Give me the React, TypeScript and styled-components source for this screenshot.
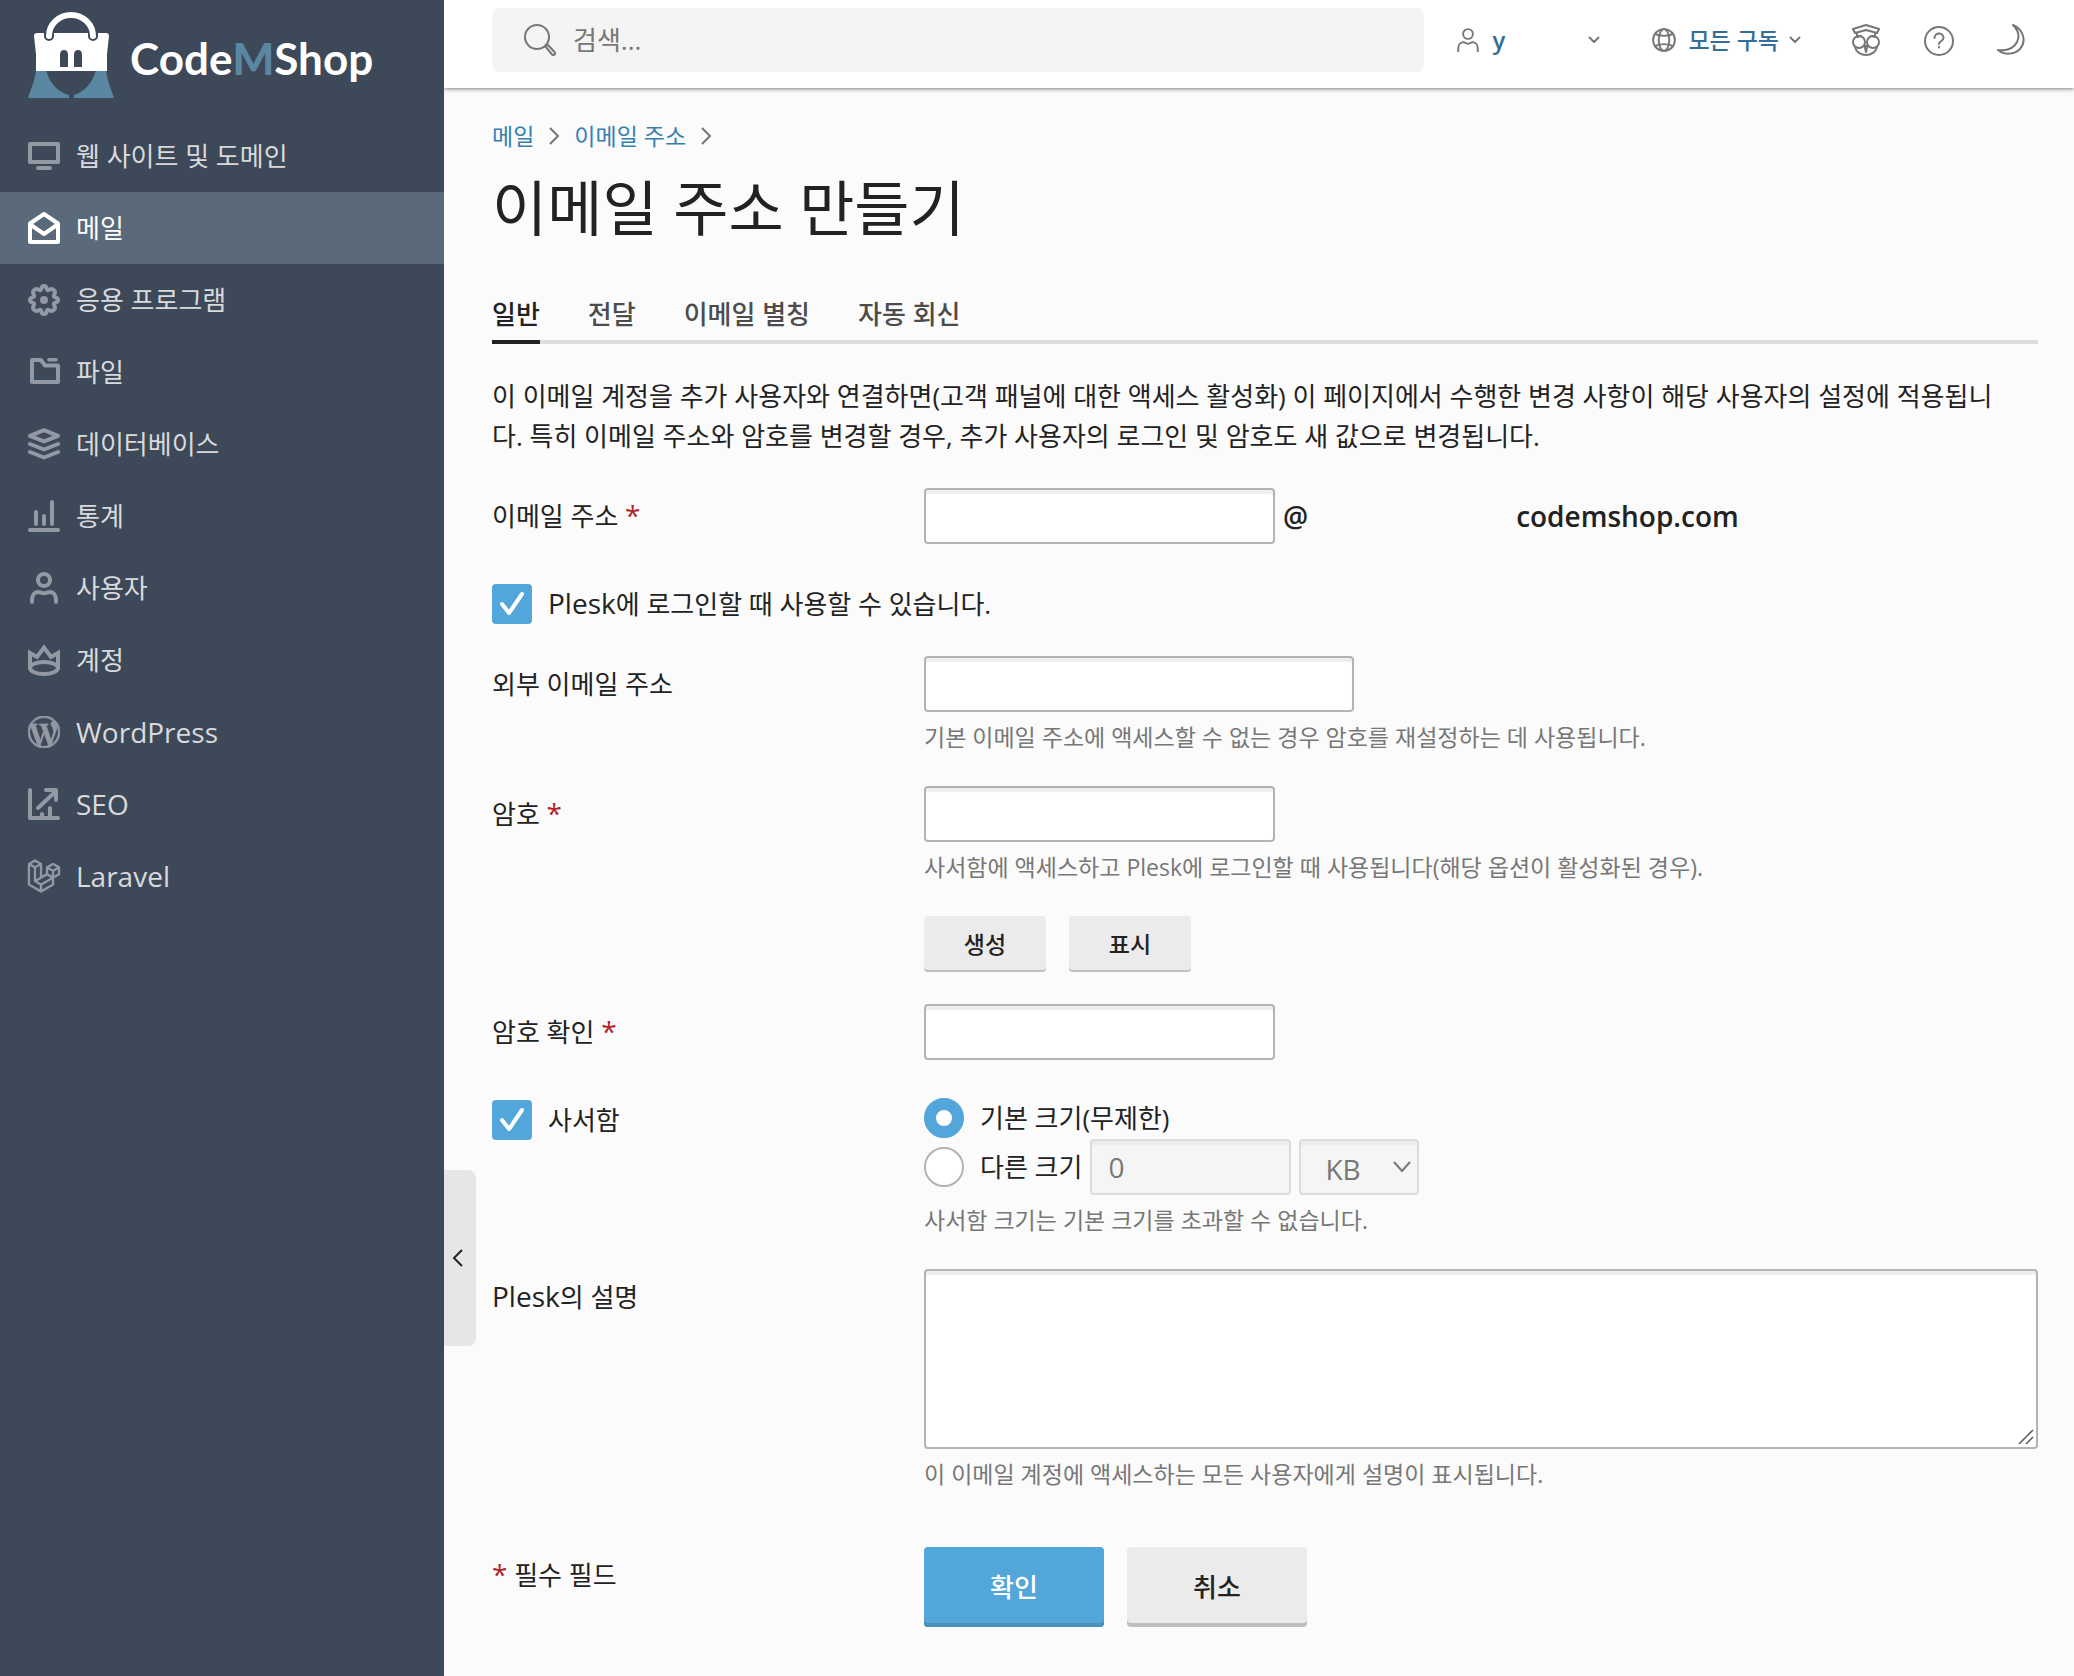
import React from "react";
import styled, { createGlobalStyle, css } from "styled-components";
import { SiLaravel, SiWordpress } from "react-icons/si";

const color = {
  sidebar: "#3d4858",
  sidebarActive: "#5a6a7b",
  page: "#fbfbfb",
  text: "#222222",
  muted: "#777777",
  link: "#3580b1",
  headerLink: "#346f99",
  accent: "#53a6d9",
  accentDark: "#4a90ba",
  border: "#b3b3b3",
  danger: "#b0242f",
  grey: "#ebebeb",
  greyDark: "#bfbfbf",
};

const GlobalStyle = createGlobalStyle`
  *, *::before, *::after { box-sizing: border-box; }
  body {
    margin: 0;
    background: ${color.page};
    color: ${color.text};
    font-family: "Open Sans", "Noto Sans CJK KR", sans-serif;
    font-size: 26px;
    line-height: 40px;
  }
  button, input, select, textarea { font: inherit; color: inherit; }
`;

const Shell = styled.div`
  display: grid;
  grid-template-columns: 444px minmax(0, 1fr);
  min-height: 100vh;
`;

/* ---------- sidebar ---------- */

const Sidebar = styled.aside`
  position: relative;
  background: ${color.sidebar};
`;

const Brand = styled.a`
  display: flex;
  align-items: center;
  gap: 16px;
  height: 120px;
  padding: 0 28px 10px;
  color: #fff;
  text-decoration: none;
`;

const BrandName = styled.span`
  padding-top: 6px;
  font-family: Lato, sans-serif;
  font-size: 44px;
  font-weight: 700;
  line-height: 48px;
`;

const BrandAccent = styled.span`
  color: #5a88a2;
  font-weight: 900;
`;

const NavItem = styled.a<{ $active?: boolean }>`
  display: flex;
  align-items: center;
  gap: 16px;
  height: 72px;
  padding: 0 28px;
  color: #d8dadd;
  text-decoration: none;
  ${(p) => p.$active && css`
    background: ${color.sidebarActive};
    color: #fff;
  `}
`;

const NavIcon = styled.span<{ $active?: boolean }>`
  display: flex;
  color: ${(p) => (p.$active ? "#fff" : "#9299a3")};
`;

const Latin = styled.span`
  font-size: 28px;
  line-height: 1;
`;

const CollapseHandle = styled.button`
  position: absolute;
  top: 1170px;
  left: 100%;
  display: flex;
  align-items: center;
  width: 32px;
  height: 176px;
  padding: 0 0 0 6px;
  border: 0;
  border-radius: 0 8px 8px 0;
  background: #e6e6e6;
`;

/* ---------- header ---------- */

const Header = styled.header`
  display: flex;
  align-items: center;
  height: 88px;
  padding: 8px 46px 16px 48px;
  background: #fff;
  box-shadow: 0 1px 4px rgba(0, 0, 0, 0.5);
`;

const SearchBox = styled.label`
  display: flex;
  flex: 1;
  align-items: center;
  gap: 17px;
  height: 64px;
  padding: 0 32px;
  border-radius: 8px;
  background: #f4f4f4;
  color: ${color.muted};
`;

const SearchInput = styled.input`
  flex: 1;
  min-width: 0;
  border: 0;
  outline: 0;
  padding: 0;
  background: transparent;
  &::placeholder { color: ${color.muted}; opacity: 1; }
`;

const HeaderMenu = styled.button<{ $wide?: boolean }>`
  display: flex;
  align-items: center;
  gap: 8px;
  width: ${(p) => (p.$wide ? "146px" : "auto")};
  margin-left: ${(p) => (p.$wide ? "32px" : "50px")};
  padding: 0;
  border: 0;
  background: none;
  color: ${color.muted};
`;

const MenuText = styled.span`
  flex: 1;
  padding-left: 4px;
  color: ${color.headerLink};
  font-size: 23px;
  font-weight: 500;
  text-align: left;
`;

const UserName = styled.span`
  font-size: 24px;
  font-weight: 600;
`;

const HeaderTools = styled.div`
  display: flex;
  gap: 41px;
  margin-left: 47px;
`;

const IconButton = styled.button`
  display: flex;
  padding: 0;
  border: 0;
  background: none;
  color: ${color.muted};
`;

/* ---------- page ---------- */

const Main = styled.main`
  padding: 32px 36px 48px 48px;
`;

const Breadcrumbs = styled.nav`
  display: flex;
  align-items: center;
  gap: 10px;
  font-size: 23px;
  line-height: 32px;
  color: ${color.muted};
`;

const Crumb = styled.a`
  color: ${color.link};
  text-decoration: none;
`;

const Title = styled.h1`
  margin: 16px 0 40px;
  font-size: 60px;
  font-weight: 400;
  line-height: 80px;
`;

const Tabs = styled.div`
  display: flex;
  gap: 48px;
  box-shadow: inset 0 -4px 0 #ddd;
`;

const Tab = styled.button<{ $active?: boolean }>`
  padding: 2px 0;
  border: 0;
  border-bottom: 4px solid ${(p) => (p.$active ? color.text : "transparent")};
  background: none;
  color: ${(p) => (p.$active ? color.text : "#4c4c4c")};
  font-weight: 500;
  line-height: 48px;
`;

const Intro = styled.p`
  margin: 32px 0;
  padding-right: 32px;
`;

const Form = styled.form`
  display: grid;
  gap: 32px;
`;

const Row = styled.div`
  display: grid;
  grid-template-columns: 432px minmax(0, 1fr);
  align-items: start;
`;

const FieldLabel = styled.label`
  line-height: 56px;
`;

const Star = styled.span`
  color: ${color.danger};
  font-size: 28px;
  line-height: 1;
`;

const Line = styled.div<{ $gap?: number }>`
  display: flex;
  align-items: center;
  gap: ${(p) => p.$gap ?? 8}px;
`;

const ButtonLine = styled(Line)`
  margin-top: 32px;
`;

const SubmitRow = styled(Row)`
  margin-top: 24px;
`;

const field = css`
  border: 2px solid ${color.border};
  border-radius: 4px;
  background: #fff;
  box-shadow: inset 0 4px 1px #eee;
  outline: 0;
  &:disabled {
    border-color: #dcdcdc;
    background: #f5f5f5;
    box-shadow: inset 0 4px 1px #ebebeb;
    color: ${color.muted};
    opacity: 1;
  }
`;

const TextField = styled.input<{ $width: number }>`
  ${field}
  display: block;
  width: ${(p) => p.$width}px;
  height: 56px;
  padding: 0 16px;
`;

const SizeField = styled(TextField)`
  font-size: 28px;
`;

const TextArea = styled.textarea`
  ${field}
  display: block;
  width: 100%;
  height: 180px;
  padding: 8px 16px;
  resize: vertical;
  &::-webkit-resizer { display: none; }
`;

const TextAreaBox = styled.div`
  position: relative;
`;

const ResizeMark = styled.svg`
  position: absolute;
  right: 4px;
  bottom: 4px;
  pointer-events: none;
`;

const SelectBox = styled.div`
  position: relative;
  color: ${color.muted};
`;

const Select = styled.select`
  ${field}
  appearance: none;
  display: block;
  width: 120px;
  height: 56px;
  padding: 4px 24px 0;
  font-size: 28px;
`;

const SelectArrow = styled.span`
  position: absolute;
  top: 20px;
  right: 7px;
  display: flex;
  pointer-events: none;
`;

const Hint = styled.p`
  margin: 8px 0 0;
  color: ${color.muted};
  font-size: 23px;
  line-height: 34px;
`;

const Domain = styled.strong`
  font-size: 28px;
  font-weight: 600;
`;

const DomainName = styled(Domain)`
  margin-left: 200px;
`;

const CheckLabel = styled.label`
  display: flex;
  align-items: center;
  align-self: start;
  gap: 16px;
  padding-top: 8px;
`;

const RadioLabel = styled.label`
  display: flex;
  align-items: center;
  gap: 16px;
`;

const RadioLine = styled(Line)`
  padding: 6px 0 1px;
`;

const CheckBoxFrame = styled.span`
  display: grid;
  place-items: center;
  color: #fff;
  & > * { grid-area: 1 / 1; }
  svg { pointer-events: none; }
`;

const Checkbox = styled.input`
  appearance: none;
  width: 40px;
  height: 40px;
  margin: 0;
  border: 2px solid ${color.border};
  border-radius: 4px;
  &:checked {
    border-color: ${color.accent};
    background: ${color.accent};
  }
`;

const Radio = styled.input`
  appearance: none;
  width: 40px;
  height: 40px;
  margin: 0;
  border: 2px solid ${color.border};
  border-radius: 50%;
  background: #fff;
  &:checked { border: 12px solid ${color.accent}; }
`;

const Button = styled.button<{ $large?: boolean; $primary?: boolean }>`
  min-width: ${(p) => (p.$large ? 180 : 122)}px;
  height: ${(p) => (p.$large ? 80 : 56)}px;
  padding: 0 24px;
  border: 0;
  border-radius: 4px;
  background: ${(p) => (p.$primary ? color.accent : color.grey)};
  box-shadow: inset 0 ${(p) => (p.$large ? -4 : -2)}px 0
    ${(p) => (p.$primary ? color.accentDark : color.greyDark)};
  color: ${(p) => (p.$primary ? "#fff" : color.text)};
  font-size: ${(p) => (p.$large ? 26 : 23)}px;
  font-weight: 500;
`;

/* ---------- icons ---------- */

type IconProps = { size?: number; stroke?: number; children: React.ReactNode };

const Icon = ({ size = 32, stroke = 4, children }: IconProps) => (
  <svg
    width={size}
    height={size}
    viewBox="0 0 32 32"
    fill="none"
    stroke="currentColor"
    strokeWidth={stroke}
    strokeLinecap="round"
    strokeLinejoin="round"
    aria-hidden="true"
  >
    {children}
  </svg>
);

const gearPath =
  "M16 2 Q18.2 2 18.6 4.6 Q19.2 7 21.4 5.8 Q24 4.2 25.9 6.1 Q27.8 8 26.2 10.6 Q25 12.8 27.4 13.4 Q30 13.8 30 16 Q30 18.2 27.4 18.6 Q25 19.2 26.2 21.4 Q27.8 24 25.9 25.9 Q24 27.8 21.4 26.2 Q19.2 25 18.6 27.4 Q18.2 30 16 30 Q13.8 30 13.4 27.4 Q12.8 25 10.6 26.2 Q8 27.8 6.1 25.9 Q4.2 24 5.8 21.4 Q7 19.2 4.6 18.6 Q2 18.2 2 16 Q2 13.8 4.6 13.4 Q7 12.8 5.8 10.6 Q4.2 8 6.1 6.1 Q8 4.2 10.6 5.8 Q12.8 7 13.4 4.6 Q13.8 2 16 2Z";

const nav = [
  { label: "웹 사이트 및 도메인", icon: <Icon><path d="M2 4h28v18H2zM10 28h12" /></Icon> },
  { label: "메일", active: true, icon: <Icon><path d="M2 11.500 16 2l14 9.500V30H2zM3 13l13 9 13-9" /></Icon> },
  { label: "응용 프로그램", icon: <Icon><path d={gearPath} /><circle cx="16" cy="16" r="4" fill="currentColor" stroke="none" /></Icon> },
  { label: "파일", icon: <Icon><path d="M4 4h9l4 5.500h13V26H4z" /><path d="M21 3.800h7" strokeWidth="3.500" /></Icon> },
  { label: "데이터베이스", icon: <Icon><path d="M16 2.200 30 7.800 16 13.400 2 7.800zM2 16l14 5.500L30 16M2 24l14 5.500L30 24" /></Icon> },
  { label: "통계", icon: <Icon><path d="M2 30h28M8 12v12M16 16v8M24 2v22" /></Icon> },
  { label: "사용자", icon: <Icon><circle cx="16" cy="8" r="6" /><path d="M4 30v-2c0-5 2.500-8 6-8 2.500 0 3.500 1.300 6 1.300S19.500 20 22 20c3.500 0 6 3 6 8v2" /></Icon> },
  { label: "계정", icon: <Icon><path d="M2 24V9l7 4 7-9.500L23 13l7-4v15" strokeLinejoin="miter" /><ellipse cx="16" cy="24" rx="14" ry="6" /></Icon> },
  { label: "WordPress", latin: true, icon: <SiWordpress size={32} stroke="currentColor" strokeWidth={0.7} /> },
  { label: "SEO", latin: true, icon: <Icon><path d="M2 2v28h28M10 20 27 4M18 2h10v10M14 26v3M22 20v9" /></Icon> },
  { label: "Laravel", latin: true, icon: <SiLaravel size={32} stroke="currentColor" strokeWidth={1} overflow="visible" /> },
];

const Logo = () => (
  <svg width="86" height="86" viewBox="0 0 86 86" aria-hidden="true">
    <path d="M8 58H18C22 72 30 80 41 83V86H0C3 77 7 68 8 58Z" fill="#5a88a2" />
    <path d="M78 58H68C64 72 56 80 46 83V86H86C83 77 79 68 78 58Z" fill="#5a88a2" />
    <path d="M6 24Q6 21 9 21H78Q81 21 81 24L79 42V59H8V42Z" fill="#fff" />
    <path d="M21 24V21M65 24V21" fill="none" stroke="#3d4858" strokeWidth="10" strokeLinecap="round" />
    <path d="M21 24A22 21 0 0 1 65 24" fill="none" stroke="#fff" strokeWidth="6" strokeLinecap="round" />
    <path d="M32 55V43q0-5 4-5t4 5v12zM46 55V43q0-5 4-5t4 5v12z" fill="#3d4858" />
  </svg>
);

const Chevron = () => (
  <Icon size={16} stroke={4}><path d="m7 11 9 9 9-9" /></Icon>
);

const CrumbArrow = () => (
  <svg width="20" height="20" viewBox="0 0 20 20" fill="none" stroke="currentColor" strokeWidth="2" aria-hidden="true">
    <path d="m6 2 8 8-8 8" />
  </svg>
);

const Check = () => (
  <svg width="28" height="28" viewBox="0 0 28 28" fill="none" stroke="currentColor" strokeWidth="4" strokeLinecap="round" strokeLinejoin="round" aria-hidden="true">
    <path d="m4 14 7 9L24 4" />
  </svg>
);

export default function App() {
  return (
    <>
      <GlobalStyle />
      <Shell>
        <Sidebar>
          <Brand href="#" aria-label="CodeMShop">
            <Logo />
            <BrandName>Code<BrandAccent>M</BrandAccent>Shop</BrandName>
          </Brand>
          <nav>
            {nav.map((item) => (
              <NavItem key={item.label} href="#" $active={item.active}>
                <NavIcon $active={item.active}>{item.icon}</NavIcon>
                {item.latin ? <Latin>{item.label}</Latin> : item.label}
              </NavItem>
            ))}
          </nav>
          <CollapseHandle type="button" aria-label="사이드바 접기">
            <svg width="16" height="20" viewBox="0 0 16 20" fill="none" stroke="currentColor" strokeWidth="2" aria-hidden="true">
              <path d="m12 2-8 8 8 8" />
            </svg>
          </CollapseHandle>
        </Sidebar>

        <div>
          <Header>
            <SearchBox>
              <Icon stroke={2}>
                <circle cx="13" cy="13" r="12" />
                <path d="m21.500 22.500 2-2 7 7.500c1.500 2-.8 4-2.500 2.500z" />
              </Icon>
              <SearchInput type="search" placeholder="검색..." aria-label="검색" />
            </SearchBox>
            <HeaderMenu type="button" $wide>
              <Icon size={24} stroke={2.600}>
                <circle cx="16" cy="8" r="6.500" />
                <path d="M3 31v-4c0-5 3-8 7-8 2.500 0 3.500 2 6 2s3.500-2 6-2c4 0 7 3 7 8v4" />
              </Icon>
              <MenuText><UserName>y</UserName></MenuText>
              <Chevron />
            </HeaderMenu>
            <HeaderMenu type="button">
              <Icon size={24} stroke={2.600}>
                <circle cx="16" cy="16" r="14.500" />
                <ellipse cx="16" cy="16" rx="7" ry="14.500" />
                <path d="M4 8q12 5 24 0M4 24q12-5 24 0" />
              </Icon>
              <MenuText>모든 구독</MenuText>
              <Chevron />
            </HeaderMenu>
            <HeaderTools>
              <IconButton type="button" aria-label="Plesk">
                <Icon stroke={2}>
                  <path d="m3 5 13-4 13 4-2 4-11-3L5 9zM7 9v4l4-1M25 9v4l-4-1" />
                  <circle cx="9" cy="18" r="6" />
                  <circle cx="23" cy="18" r="6" />
                  <path d="M14.500 22h3L16 28zM5 23c1 5 6 8 11 8s10-3 11-8" />
                </Icon>
              </IconButton>
              <IconButton type="button" aria-label="도움말">
                <Icon stroke={2}>
                  <circle cx="16" cy="17" r="14" />
                  <path d="M11.500 14c0-6 9-6 9 0 0 3-4.500 3-4.500 6M16 23v.500" />
                </Icon>
              </IconButton>
              <IconButton type="button" aria-label="어두운 테마">
                <Icon stroke={2}>
                  <path d="M17 1c10 4 14 16 7 24-6 6-16 6-22 1 9 1 16-2 19-8s1-12-4-17z" />
                </Icon>
              </IconButton>
            </HeaderTools>
          </Header>

          <Main>
            <Breadcrumbs>
              <Crumb href="#">메일</Crumb>
              <CrumbArrow />
              <Crumb href="#">이메일 주소</Crumb>
              <CrumbArrow />
            </Breadcrumbs>
            <Title>이메일 주소 만들기</Title>
            <Tabs role="tablist">
              <Tab type="button" role="tab" aria-selected $active>일반</Tab>
              <Tab type="button" role="tab">전달</Tab>
              <Tab type="button" role="tab">이메일 별칭</Tab>
              <Tab type="button" role="tab">자동 회신</Tab>
            </Tabs>
            <Intro>
              이 이메일 계정을 추가 사용자와 연결하면(고객 패널에 대한 액세스 활성화) 이 페이지에서 수행한 변경 사항이 해당 사용자의 설정에 적용됩니다. 특히 이메일 주소와 암호를 변경할 경우, 추가 사용자의 로그인 및 암호도 새 값으로 변경됩니다.
            </Intro>

            <Form onSubmit={(e) => e.preventDefault()}>
              <Row>
                <FieldLabel htmlFor="email">이메일 주소 <Star>*</Star></FieldLabel>
                <Line>
                  <TextField id="email" $width={351} />
                  <Domain>@</Domain>
                  <DomainName>codemshop.com</DomainName>
                </Line>
              </Row>

              <CheckLabel>
                <CheckBoxFrame>
                  <Checkbox type="checkbox" defaultChecked />
                  <Check />
                </CheckBoxFrame>
                <span><Latin>Plesk</Latin>에 로그인할 때 사용할 수 있습니다.</span>
              </CheckLabel>

              <Row>
                <FieldLabel htmlFor="external">외부 이메일 주소</FieldLabel>
                <div>
                  <TextField id="external" $width={430} />
                  <Hint>기본 이메일 주소에 액세스할 수 없는 경우 암호를 재설정하는 데 사용됩니다.</Hint>
                </div>
              </Row>

              <Row>
                <FieldLabel htmlFor="password">암호 <Star>*</Star></FieldLabel>
                <div>
                  <TextField id="password" type="password" $width={351} />
                  <Hint>사서함에 액세스하고 Plesk에 로그인할 때 사용됩니다(해당 옵션이 활성화된 경우).</Hint>
                  <ButtonLine $gap={23}>
                    <Button type="button">생성</Button>
                    <Button type="button">표시</Button>
                  </ButtonLine>
                </div>
              </Row>

              <Row>
                <FieldLabel htmlFor="confirm">암호 확인 <Star>*</Star></FieldLabel>
                <Line>
                  <TextField id="confirm" type="password" $width={351} />
                </Line>
              </Row>

              <Row>
                <CheckLabel>
                  <CheckBoxFrame>
                    <Checkbox type="checkbox" defaultChecked />
                    <Check />
                  </CheckBoxFrame>
                  사서함
                </CheckLabel>
                <div>
                  <RadioLine>
                    <RadioLabel>
                      <Radio type="radio" name="quota" defaultChecked />
                      기본 크기(무제한)
                    </RadioLabel>
                  </RadioLine>
                  <Line>
                    <RadioLabel>
                      <Radio type="radio" name="quota" />
                      다른 크기
                    </RadioLabel>
                    <SizeField $width={201} defaultValue="0" disabled aria-label="다른 크기" />
                    <SelectBox>
                      <Select disabled defaultValue="KB" aria-label="단위">
                        <option>KB</option>
                        <option>MB</option>
                        <option>GB</option>
                      </Select>
                      <SelectArrow>
                        <svg width="20" height="16" viewBox="0 0 20 16" fill="none" stroke="currentColor" strokeWidth="2" aria-hidden="true">
                          <path d="m2 3 8 9 8-9" />
                        </svg>
                      </SelectArrow>
                    </SelectBox>
                  </Line>
                  <Hint>사서함 크기는 기본 크기를 초과할 수 없습니다.</Hint>
                </div>
              </Row>

              <Row>
                <FieldLabel htmlFor="description"><Latin>Plesk</Latin>의 설명</FieldLabel>
                <div>
                  <TextAreaBox>
                    <TextArea id="description" />
                    <ResizeMark width="16" height="16" viewBox="0 0 16 16" stroke="#555" strokeWidth="1.500" aria-hidden="true">
                      <path d="M1 15 15 1M8 15l7-7" />
                    </ResizeMark>
                  </TextAreaBox>
                  <Hint>이 이메일 계정에 액세스하는 모든 사용자에게 설명이 표시됩니다.</Hint>
                </div>
              </Row>

              <SubmitRow>
                <FieldLabel as="span"><Star>*</Star> 필수 필드</FieldLabel>
                <Line $gap={23}>
                  <Button type="submit" $large $primary>확인</Button>
                  <Button type="button" $large>취소</Button>
                </Line>
              </SubmitRow>
            </Form>
          </Main>
        </div>
      </Shell>
    </>
  );
}
